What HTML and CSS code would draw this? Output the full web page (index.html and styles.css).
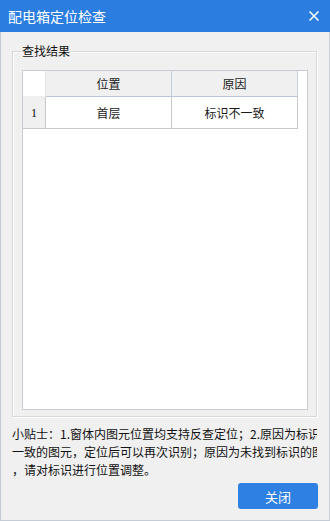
FILE: index.html
```html
<!DOCTYPE html>
<html lang="zh-CN">
<head>
    <meta charset="UTF-8">
    <meta name="viewport" content="width=device-width, initial-scale=1.0">
    <title>配电箱定位检查</title>
    <link rel="stylesheet" href="styles.css">
</head>
<body>

    <div class="window">
        <div class="titlebar">
            <span class="title">配电箱定位检查</span>
            <svg class="close-icon" width="10" height="10" viewBox="0 0 10 10">
                <path d="M0.5 0.5 L9.5 9.5 M9.5 0.5 L0.5 9.5" stroke="#fff" stroke-width="1.5" fill="none"/>
            </svg>
        </div>

        <div class="content">
            <fieldset class="group">
                <legend>查找结果</legend>
                <div class="grid">
                    <div class="grid-row head">
                        <div class="cell num"></div>
                        <div class="cell">位置</div>
                        <div class="cell">原因</div>
                    </div>
                    <div class="grid-row">
                        <div class="cell num">1</div>
                        <div class="cell">首层</div>
                        <div class="cell">标识不一致</div>
                    </div>
                </div>
            </fieldset>

            <div class="tips">
                <div class="tip-line">小贴士：1.窗体内图元位置均支持反查定位；2.原因为标识不</div>
                <div class="tip-line">一致的图元，定位后可以再次识别；原因为未找到标识的图元</div>
                <div class="tip-line">，请对标识进行位置调整。</div>
            </div>

            <div class="actions">
                <button class="close-btn">关闭</button>
            </div>
        </div>
    </div>

</body>
</html>
```

FILE: styles.css
```css
body {
    margin: 0;
    font-family: "Noto Sans CJK SC", "Microsoft YaHei", sans-serif;
    background: #f0f0f0;
}

.window {
    width: 330px;
    height: 521px;
    display: flex;
    flex-direction: column;
}

.titlebar {
    height: 32px;
    background: #2b7de0;
    display: flex;
    align-items: center;
    justify-content: space-between;
    padding: 0 11px 0 8px;
    flex-shrink: 0;
}

.title {
    color: #fff;
    font-size: 14px;
    line-height: 32px;
}

.close-icon {
    display: block;
    margin-top: -1px;
}

.content {
    flex: 1;
    border: 1px solid #c5ccd6;
    border-top: none;
    padding: 12px 11px 0 11px;
}

.group {
    width: 305px;
    box-sizing: border-box;
    margin: 0;
    padding: 12px 8px 6px 9px;
    border: 1px solid #d8d8d8;
    box-shadow: inset 1px 1px 0 #fff, 1px 1px 0 #fff;
}

.group legend {
    padding: 0;
    font-size: 12px;
    line-height: 14px;
    color: #111;
    background: #f0f0f0;
}

.grid {
    height: 340px;
    box-sizing: border-box;
    border: 1px solid #c8ccd2;
    background: #fff;
}

.grid-row {
    display: grid;
    grid-template-columns: 23px 126px 126px;
}

.cell {
    box-sizing: border-box;
    height: 32px;
    border-right: 1px solid #c9c9c9;
    border-bottom: 1px solid #c9c9c9;
    font-size: 12px;
    color: #1a1a1a;
    text-align: center;
    line-height: 31px;
}

.head .cell {
    height: 26px;
    line-height: 25px;
    background: #f0f0f0;
    border-right-color: #c4cdd9;
    border-bottom-color: #b9c6d8;
}

.head .cell.num {
    background: #fff;
    border-right-color: #e6e6e6;
    border-bottom-color: #eeeeee;
}

.cell.num {
    background: #f0f0f0;
    font-family: "Liberation Serif", serif;
    font-size: 13px;
}

.tips {
    margin-top: 8px;
    width: 305px;
    overflow: hidden;
    font-size: 12px;
    line-height: 18px;
    color: #111;
}

.tip-line {
    white-space: nowrap;
}

.actions {
    display: flex;
    justify-content: flex-end;
    margin-top: 4px;
}

.close-btn {
    width: 80px;
    height: 26px;
    border: none;
    border-radius: 3px;
    background: #2e80e2;
    color: #fff;
    font-family: "Noto Sans CJK SC", sans-serif;
    font-size: 13px;
    padding: 0;
}
```
